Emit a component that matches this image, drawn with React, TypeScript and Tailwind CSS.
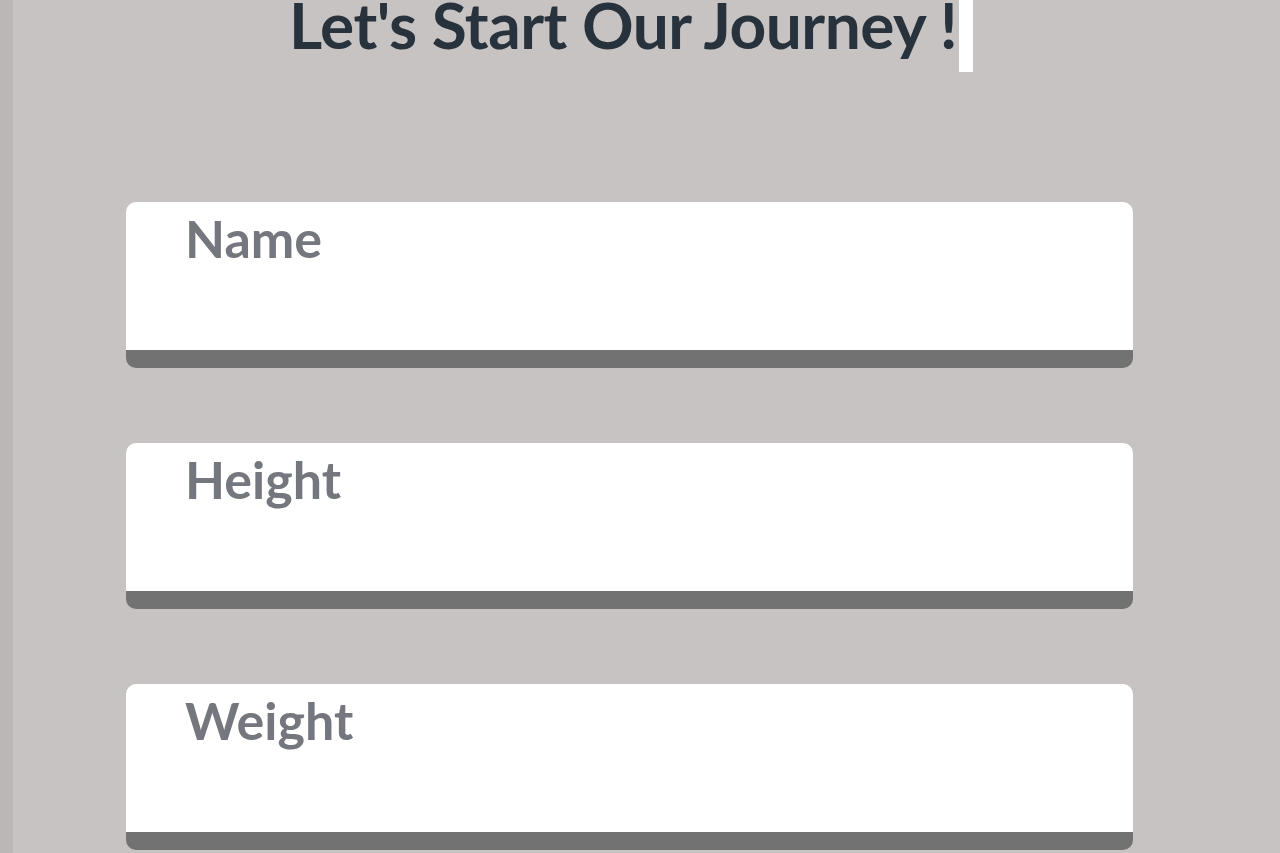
import React from "react";

const fields = ["Name", "Height", "Weight"];

export default function App() {
  return (
    <div className="w-[1280px] h-[853px] overflow-hidden bg-[#c7c3c2] flex" style={{ fontFamily: "Lato, 'Open Sans', sans-serif" }}>
      <div className="w-[13px] h-full bg-[#bbb7b6] shrink-0" />
      <div className="flex-1 flex flex-col">
        <div className="h-[72px] flex justify-start pl-[276px]">
          <h1 className="text-[64px] leading-[50px] font-bold text-[#28323c] tracking-[-0.5px]">
            Let's Start Our Journey !
          </h1>
          <span className="w-[14px] h-[72px] bg-white ml-[2px]" />
        </div>
        <div className="flex flex-col gap-[75px] pl-[113px] pt-[130px]">
          {fields.map((f) => (
            <div
              key={f}
              className="w-[1007px] h-[166px] bg-white rounded-[10px] border-b-[18px] border-[#727272] pl-[59px] pt-[8px]"
            >
              <span className="text-[52px] leading-[56px] font-bold text-[#74777d]">{f}</span>
            </div>
          ))}
        </div>
      </div>
    </div>
  );
}
